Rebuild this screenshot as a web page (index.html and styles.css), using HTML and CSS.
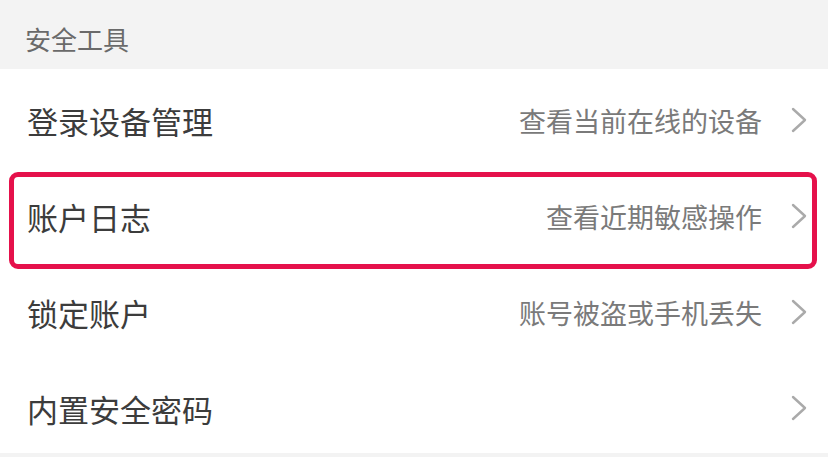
FILE: index.html
```html
<!DOCTYPE html>
<html lang="zh-CN">
<head>
<meta charset="utf-8">
<link rel="stylesheet" href="styles.css">
</head>
<body>
<div class="page">
  <div class="section-title">安全工具</div>
  <div class="list">
    <div class="row">
      <span class="label">登录设备管理</span>
      <span class="hint">查看当前在线的设备</span>
      <svg class="chev" viewBox="0 0 16 26" width="16" height="26"><path d="M2 2 L14 13 L2 24" fill="none" stroke="#aaaaaa" stroke-width="2.4" stroke-linecap="round" stroke-linejoin="round"/></svg>
    </div>
    <div class="row highlighted">
      <span class="label">账户日志</span>
      <span class="hint">查看近期敏感操作</span>
      <svg class="chev" viewBox="0 0 16 26" width="16" height="26"><path d="M2 2 L14 13 L2 24" fill="none" stroke="#aaaaaa" stroke-width="2.4" stroke-linecap="round" stroke-linejoin="round"/></svg>
      <div class="mark"></div>
    </div>
    <div class="row">
      <span class="label">锁定账户</span>
      <span class="hint">账号被盗或手机丢失</span>
      <svg class="chev" viewBox="0 0 16 26" width="16" height="26"><path d="M2 2 L14 13 L2 24" fill="none" stroke="#aaaaaa" stroke-width="2.4" stroke-linecap="round" stroke-linejoin="round"/></svg>
    </div>
    <div class="row">
      <span class="label">内置安全密码</span>
      <span class="hint"></span>
      <svg class="chev" viewBox="0 0 16 26" width="16" height="26"><path d="M2 2 L14 13 L2 24" fill="none" stroke="#aaaaaa" stroke-width="2.4" stroke-linecap="round" stroke-linejoin="round"/></svg>
    </div>
  </div>
</div>
</body>
</html>
```

FILE: styles.css
```css
html, body {
  margin: 0;
  padding: 0;
  background: #f3f3f3;
}
body {
  font-family: "Noto Sans CJK SC", "Noto Sans", sans-serif;
  width: 828px;
  height: 457px;
  overflow: hidden;
}
.section-title {
  height: 69px;
  box-sizing: border-box;
  padding: 7px 0 0 25px;
  display: flex;
  align-items: center;
  font-size: 26px;
  color: #6a6a6a;
  background: #f3f3f3;
}
.list {
  background: #ffffff;
}
.row {
  position: relative;
  height: 96px;
  box-sizing: border-box;
  padding: 6px 21px 0 27px;
  display: flex;
  align-items: center;
}
.label {
  font-size: 31px;
  color: #3c3c3c;
  flex: 1;
  line-height: 1;
}
.hint {
  font-size: 27px;
  color: #7a7a7a;
  line-height: 1;
  margin-right: 29px;
}
.chev {
  display: block;
}
.mark {
  position: absolute;
  left: 9px;
  right: 11px;
  top: 7px;
  bottom: -8px;
  border: 5px solid #e5114b;
  border-radius: 9px;
  pointer-events: none;
}
```
